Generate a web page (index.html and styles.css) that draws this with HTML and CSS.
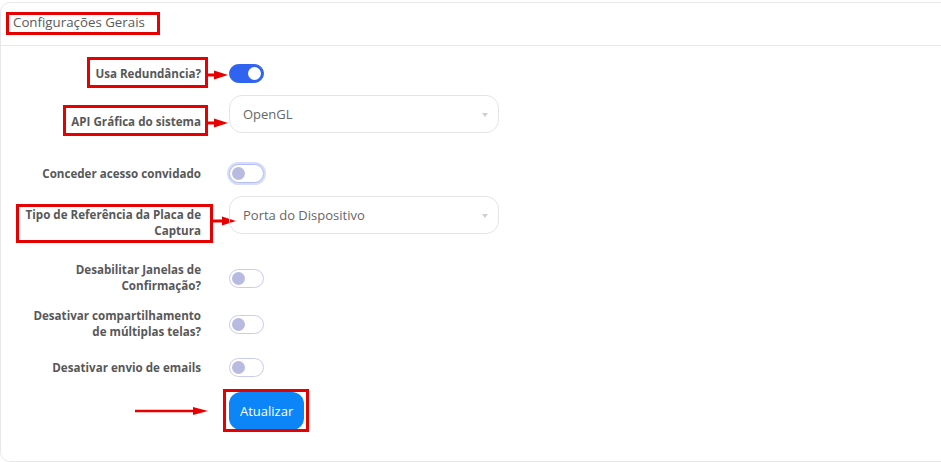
FILE: index.html
```html
<!DOCTYPE html>
<html lang="pt-BR">
<head>
<meta charset="utf-8">
<title>Configurações Gerais</title>
<link rel="stylesheet" href="styles.css">
</head>
<body>
<div class="card">
  <div class="card-header"><span class="mark mark-head">Configurações Gerais</span></div>
  <form class="card-body">
    <div class="row">
      <label class="lbl"><span class="mark mark-a">Usa Redundância?<span class="arrow arrow-a"><svg width="20" height="10" viewBox="0 0 20 10"><line x1="0" y1="5" x2="8" y2="5" stroke="#e60000" stroke-width="3"/><polygon points="6,0.5 20,5 6,9.5" fill="#e60000"/></svg></span></span></label>
      <div class="ctl"><span class="switch on"></span></div>
    </div>
    <div class="row sp-2 row-select">
      <label class="lbl"><span class="mark mark-a">API Gráfica do sistema<span class="arrow arrow-a"><svg width="20" height="10" viewBox="0 0 20 10"><line x1="0" y1="5" x2="8" y2="5" stroke="#e60000" stroke-width="3"/><polygon points="6,0.5 20,5 6,9.5" fill="#e60000"/></svg></span></span></label>
      <div class="ctl"><div class="select">OpenGL<span class="caret"></span></div></div>
    </div>
    <div class="row sp-3">
      <label class="lbl">Conceder acesso convidado</label>
      <div class="ctl"><span class="switch focus"></span></div>
    </div>
    <div class="row sp-4 row-select">
      <label class="lbl"><span class="mark mark-b">Tipo de Referência da Placa de Captura<span class="arrow arrow-b"><svg width="23" height="10" viewBox="0 0 23 10"><line x1="0" y1="5" x2="10" y2="5" stroke="#e60000" stroke-width="3"/><polygon points="9,0.5 23,5 9,9.5" fill="#e60000"/></svg></span></span></label>
      <div class="ctl"><div class="select">Porta do Dispositivo<span class="caret"></span></div></div>
    </div>
    <div class="row sp-5">
      <label class="lbl">Desabilitar Janelas de Confirmação?</label>
      <div class="ctl"><span class="switch"></span></div>
    </div>
    <div class="row sp-6">
      <label class="lbl">Desativar compartilhamento de múltiplas telas?</label>
      <div class="ctl"><span class="switch"></span></div>
    </div>
    <div class="row sp-7">
      <label class="lbl">Desativar envio de emails</label>
      <div class="ctl"><span class="switch"></span></div>
    </div>
    <div class="row sp-8">
      <div class="lbl"></div>
      <div class="ctl">
        <span class="mark mark-btn"><button type="button" class="btn">Atualizar</button><span class="arrow arrow-btn"><svg width="73" height="10" viewBox="0 0 73 10"><line x1="0" y1="5" x2="60" y2="5" stroke="#e60000" stroke-width="2.5"/><polygon points="58,1 73,5 58,9" fill="#e60000"/></svg></span></span>
      </div>
    </div>
  </form>
</div>
</body>
</html>
```
FILE: styles.css
```css
* { box-sizing: border-box; }
html, body { margin: 0; background: #fff; }
body { font-family: "Open Sans", "Liberation Sans", sans-serif; overflow: hidden; }

.card {
  margin-top: 2px;
  margin-right: -20px;
  height: 460px;
  border: 1px solid #e8e8ec;
  border-radius: 10px;
  background: #fff;
}
.card-header {
  height: 43px;
  border-bottom: 1px solid #e8e8ec;
  padding: 10px 12px 0;
  font-size: 13.3px;
  line-height: 19px;
  color: #5a5a5a;
}
.card-body {
  margin: 0;
  padding: 18px 0 0 20px;
}
.row {
  display: grid;
  grid-template-columns: 180px 270px;
  column-gap: 28px;
  align-items: center;
}
.sp-2 { margin-top: 12px; }
.sp-3 { margin-top: 31px; }
.sp-4 { margin-top: 13px; }
.sp-5 { margin-top: 28px; }
.sp-6 { margin-top: 14px; }
.sp-7 { margin-top: 18px; }
.sp-8 { margin-top: 15px; }

.lbl {
  display: block;
  text-align: right;
  font-size: 11.6px;
  line-height: 16px;
  font-weight: 700;
  color: #585858;
}
.row-select .lbl { padding-top: 15px; margin: -6px 0; }
.ctl { display: flex; align-items: center; }

/* annotation boxes */
.mark { position: relative; display: inline-block; }
.mark::before {
  content: "";
  position: absolute;
  border: 3px solid #e60000;
  pointer-events: none;
}
.mark-head::before { top: -1px; bottom: -3px; left: -7px; right: -15px; }
.mark-a::before { top: -9px; bottom: -6px; left: -8px; right: -7px; }
.mark-b::before { top: -3px; bottom: -4px; left: -5px; right: -12px; }
.mark-btn { display: inline-flex; }
.mark-btn::before { top: -3px; bottom: -2px; left: -6px; right: -5px; }
.arrow { position: absolute; top: 50%; display: block; line-height: 0; }
.arrow-a { left: calc(100% + 7px); margin-top: -4px; }
.arrow-b { left: calc(100% + 12px); margin-top: -7px; }
.arrow-btn { left: -94px; margin-top: -5px; }

/* switches */
.switch {
  position: relative;
  display: block;
  width: 35px;
  height: 19px;
  border: 1px solid #c9ccee;
  border-radius: 10px;
  background: #fff;
}
.switch::after {
  content: "";
  position: absolute;
  top: 2px;
  left: 2px;
  width: 13px;
  height: 13px;
  border-radius: 50%;
  background: #b8bbdf;
}
.switch.on { background: #3063f0; border-color: #3063f0; }
.switch.on::after { left: auto; right: 2px; background: #fff; }
.switch.focus {
  border-color: #b3bdf3;
  box-shadow: 0 0 0 2px #d6dcfc;
}

/* select */
.select {
  position: relative;
  display: flex;
  align-items: center;
  width: 270px;
  height: 38px;
  padding: 0 13px;
  border: 1px solid #e4e4e4;
  border-radius: 13px;
  font-size: 13px;
  color: #666;
}
.caret {
  position: absolute;
  right: 10px;
  top: 17px;
  border-left: 3.5px solid transparent;
  border-right: 3.5px solid transparent;
  border-top: 4px solid #cfcfcf;
}

.btn {
  height: 38px;
  padding: 0 11px;
  border: 0;
  border-radius: 12px;
  background: #0b85f7;
  color: #fff;
  font-family: "Open Sans", "Liberation Sans", sans-serif;
  font-size: 13px;
}
```
